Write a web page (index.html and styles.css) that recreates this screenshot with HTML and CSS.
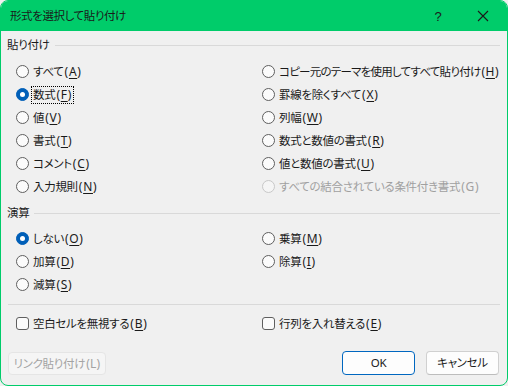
FILE: index.html
```html
<!DOCTYPE html>
<html lang="ja">
<head>
<meta charset="utf-8">
<title>形式を選択して貼り付け</title>
<link rel="stylesheet" href="styles.css">
</head>
<body>
<div class="window">
  <div class="titlebar">
    <span class="title">形式を選択して貼り付け</span>
    <span class="help">?</span>
    <span class="close"><svg width="12" height="12" viewBox="0 0 12 12"><path d="M1 1L11 11M11 1L1 11" stroke="#1a1a1a" stroke-width="1.1" fill="none"/></svg></span>
  </div>
  <div class="content">
    <div class="group-head"><span>貼り付け</span><i class="line"></i></div>
    <div class="grid paste">
      <div class="opt"><span class="radio"></span><span class="lbl">すべて<span class="key">(<u>A</u>)</span></span></div>
      <div class="opt"><span class="radio"></span><span class="lbl long">コピー元のテーマを使用してすべて貼り付け<span class="key">(<u>H</u>)</span></span></div>
      <div class="opt"><span class="radio on"></span><span class="lbl focus">数式<span class="key">(<u>F</u>)</span></span></div>
      <div class="opt"><span class="radio"></span><span class="lbl">罫線を除くすべて<span class="key">(<u>X</u>)</span></span></div>
      <div class="opt"><span class="radio"></span><span class="lbl">値<span class="key">(<u>V</u>)</span></span></div>
      <div class="opt"><span class="radio"></span><span class="lbl">列幅<span class="key">(<u>W</u>)</span></span></div>
      <div class="opt"><span class="radio"></span><span class="lbl">書式<span class="key">(<u>T</u>)</span></span></div>
      <div class="opt"><span class="radio"></span><span class="lbl">数式と数値の書式<span class="key">(<u>R</u>)</span></span></div>
      <div class="opt"><span class="radio"></span><span class="lbl">コメント<span class="key">(<u>C</u>)</span></span></div>
      <div class="opt"><span class="radio"></span><span class="lbl">値と数値の書式<span class="key">(<u>U</u>)</span></span></div>
      <div class="opt"><span class="radio"></span><span class="lbl">入力規則<span class="key">(<u>N</u>)</span></span></div>
      <div class="opt disabled"><span class="radio"></span><span class="lbl">すべての結合されている条件付き書式<span class="key">(G)</span></span></div>
    </div>
    <div class="group-head calc-head"><span>演算</span><i class="line"></i></div>
    <div class="grid calc">
      <div class="opt"><span class="radio on"></span><span class="lbl">しない<span class="key">(<u>O</u>)</span></span></div>
      <div class="opt"><span class="radio"></span><span class="lbl">乗算<span class="key">(<u>M</u>)</span></span></div>
      <div class="opt"><span class="radio"></span><span class="lbl">加算<span class="key">(<u>D</u>)</span></span></div>
      <div class="opt"><span class="radio"></span><span class="lbl">除算<span class="key">(<u>I</u>)</span></span></div>
      <div class="opt"><span class="radio"></span><span class="lbl">減算<span class="key">(<u>S</u>)</span></span></div>
    </div>
    <div class="sep"></div>
    <div class="grid checks">
      <div class="opt"><span class="check"></span><span class="lbl">空白セルを無視する<span class="key">(<u>B</u>)</span></span></div>
      <div class="opt"><span class="check"></span><span class="lbl">行列を入れ替える<span class="key">(<u>E</u>)</span></span></div>
    </div>
    <div class="buttons">
      <button class="btn link" disabled>リンク貼り付け<span class="key">(L)</span></button>
      <span class="spacer"></span>
      <button class="btn ok">OK</button>
      <button class="btn">キャンセル</button>
    </div>
  </div>
</div>
</body>
</html>
```
FILE: styles.css
```css
html, body {
  margin: 0;
  padding: 0;
  background: #f0f0f0;
}
body {
  font-family: "Noto Sans", "Noto Sans CJK JP", sans-serif;
  font-size: 11.5px;
  color: #1a1a1a;
  font-feature-settings: "palt";
  letter-spacing: -0.3px;
}
.window {
  width: 508px;
  height: 386px;
  box-sizing: border-box;
  border: 1px solid #00cc6a;
  border-radius: 8px;
  overflow: hidden;
  background: #f0f0f0;
  display: flex;
  flex-direction: column;
}
.titlebar {
  height: 30px;
  flex: none;
  background: #00cc6a;
  display: flex;
  align-items: center;
  padding-left: 9px;
}
.title {
  flex: 1;
  color: #1a1a1a;
  line-height: 16px;
  letter-spacing: -0.4px;
}
.help {
  width: 46px;
  text-align: center;
  font-family: "Liberation Sans", sans-serif;
  font-size: 13px;
  margin-right: -1px;
}
.close {
  width: 46px;
  display: flex;
  justify-content: center;
  align-items: center;
  margin-right: 1px;
}
.content {
  flex: 1;
  display: flex;
  flex-direction: column;
  padding: 0 7px 0 6px;
}
.group-head {
  display: flex;
  align-items: center;
  height: 18px;
  margin-top: 5px;
  line-height: 18px;
}
.group-head .line {
  flex: 1;
  height: 1px;
  background: #d9d9d9;
  margin-left: 5px;
  margin-top: 1px;
}
.calc-head {
  margin-top: 6px;
}
.grid {
  display: grid;
  grid-template-columns: 246px 1fr;
  grid-auto-rows: 23px;
  margin-left: 9px;
}
.paste {
  margin-top: 6px;
}
.calc {
  margin-top: 5px;
}
.opt {
  display: flex;
  align-items: center;
  gap: 2px;
}
.radio {
  width: 13px;
  height: 13px;
  box-sizing: border-box;
  border: 1px solid #5f5f5f;
  border-radius: 50%;
  background: #fbfbfb;
  flex: none;
  position: relative;
}
.radio.on {
  background: #005fb8;
  border-color: #005fb8;
}
.radio.on::after {
  content: "";
  position: absolute;
  left: 3px;
  top: 3px;
  width: 5px;
  height: 5px;
  border-radius: 50%;
  background: #fff;
}
.check {
  width: 13px;
  height: 13px;
  box-sizing: border-box;
  border: 1px solid #5f5f5f;
  border-radius: 3px;
  background: #fbfbfb;
  flex: none;
}
.lbl {
  padding: 0 1px;
  border: 1px dotted transparent;
  line-height: 16px;
  white-space: nowrap;
}
.key {
  font-size: 12px;
  letter-spacing: 0.7px;
  padding-left: 1px;
}
.lbl.long {
  letter-spacing: -0.75px;
}
.lbl.long .key {
  letter-spacing: 0.5px;
}
.lbl.focus {
  border-color: #000;
}
u {
  text-decoration-thickness: 1px;
  text-underline-offset: 2px;
}
.disabled .radio {
  border-color: #c8c8c8;
  background: #f5f5f5;
}
.disabled .lbl {
  color: #a0a0a0;
}
.sep {
  height: 1px;
  background: #d9d9d9;
  margin-top: 8px;
  margin-left: 1px;
}
.checks {
  margin-top: 7px;
}
.buttons {
  display: flex;
  margin-top: 16px;
  margin-left: 1px;
  margin-right: 1px;
  gap: 11px;
}
.spacer {
  flex: 1;
}
.btn {
  font: inherit;
  font-feature-settings: "palt";
  letter-spacing: -0.3px;
  height: 24px;
  box-sizing: border-box;
  width: 73px;
  background: #fdfdfd;
  border: 1px solid #d0d0d0;
  border-bottom-color: #bdbdbd;
  border-radius: 4px;
  color: #1a1a1a;
  padding: 0;
  line-height: 20px;
}
.btn.ok {
  border: 1px solid #0067c0;
}
.btn.link {
  width: 98px;
  height: 23px;
  margin-top: 1px;
  background: #f5f5f5;
  border: 1px solid #e5e5e5;
  color: #a3a3a3;
}
.btn.link .key {
  letter-spacing: 0.3px;
}
```
